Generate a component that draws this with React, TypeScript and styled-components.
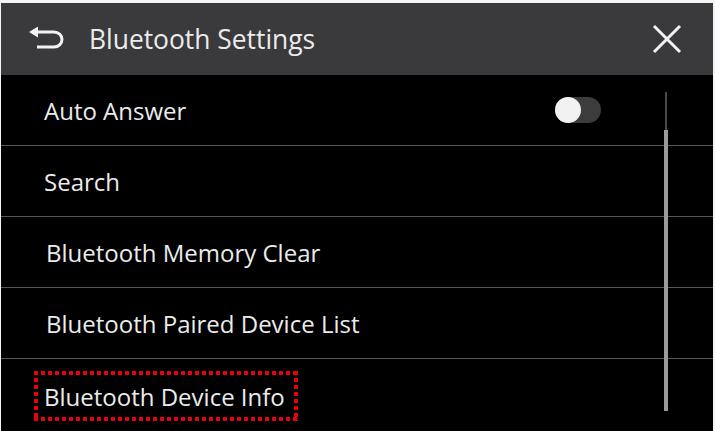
import React from 'react';
import styled, { createGlobalStyle } from 'styled-components';

const GlobalStyle = createGlobalStyle`
  html, body {
    margin: 0;
    padding: 0;
    background: #f4f4f4;
  }
  body {
    font-family: "Open Sans", "Noto Sans", sans-serif;
  }
`;

const Screen = styled.div`
  margin: 3px 2px 0 1px;
  height: 428px;
  background: #000;
  display: flex;
  flex-direction: column;
  overflow: hidden;
`;

const Header = styled.header`
  height: 72px;
  flex: none;
  background: #3a393c;
  display: flex;
  align-items: center;
  padding: 0 31px 0 27px;
`;

const IconButton = styled.button`
  background: transparent;
  border: none;
  padding: 0;
  display: flex;
  align-items: center;
  justify-content: center;
  color: #f2f2f2;
  cursor: pointer;
`;

const HeaderTitle = styled.h1`
  flex: 1;
  margin: 0 0 0 25px;
  font-size: 26.4px;
  font-weight: 400;
  color: #ececec;
  letter-spacing: 0;
`;

const Body = styled.div`
  position: relative;
  flex: 1;
  display: flex;
  flex-direction: column;
`;

const Row = styled.div<{ $indent?: number; $last?: boolean }>`
  height: 70px;
  flex: none;
  border-bottom: ${p => (p.$last ? 'none' : '1px solid #555')};
  display: flex;
  align-items: center;
  padding: 0 112px 0 ${p => p.$indent ?? 43}px;
`;

const Label = styled.span`
  flex: 1;
  font-size: 24px;
  color: #ebebeb;
`;

const dotsX = 'repeating-linear-gradient(90deg, #e8000b 0 4px, transparent 4px 7px)';
const dotsY = 'repeating-linear-gradient(180deg, #e8000b 0 4px, transparent 4px 7px)';

const Highlight = styled.span`
  box-sizing: border-box;
  font-size: 24px;
  color: #ebebeb;
  height: 50px;
  width: 264px;
  display: flex;
  align-items: center;
  padding: 0 0 0 10px;
  margin-left: -11px;
  margin-top: 4px;
  background:
    ${dotsX} top left / 100% 4px no-repeat,
    ${dotsX} bottom left / 100% 4px no-repeat,
    ${dotsY} top left / 4px 100% no-repeat,
    ${dotsY} top right / 4px 100% no-repeat;
`;

const Toggle = styled.div<{ $on: boolean }>`
  width: 46px;
  height: 26px;
  border-radius: 13px;
  background: ${p => (p.$on ? '#2a7de1' : '#3c3c3c')};
  position: relative;
  &::before {
    content: '';
    position: absolute;
    top: 0;
    left: ${p => (p.$on ? '20px' : '0')};
    width: 26px;
    height: 26px;
    border-radius: 50%;
    background: #f2f2f2;
  }
`;

const ScrollTrack = styled.div`
  position: absolute;
  left: 664px;
  top: 17px;
  width: 2px;
  height: 319px;
  background: #4a4a4a;
`;

const ScrollThumb = styled.div`
  position: absolute;
  left: -1px;
  top: 38px;
  width: 4px;
  bottom: 0;
  background: #9b9b9b;
`;

const BackIcon = () => (
  <svg width="36" height="24" viewBox="0 0 36 24" fill="none">
    <path d="M8 5 H26 A8 7.5 0 0 1 26 20 H9" stroke="currentColor" strokeWidth="3" />
    <path d="M1 5 L10 -0.5 L10 10.5 Z" fill="currentColor" />
  </svg>
);

const CloseIcon = () => (
  <svg width="30" height="30" viewBox="0 0 30 30" fill="none">
    <path d="M2 2 L28 28 M28 2 L2 28" stroke="currentColor" strokeWidth="3" />
  </svg>
);

export default function App() {
  return (
    <>
      <GlobalStyle />
      <Screen>
        <Header>
          <IconButton aria-label="Back">
            <BackIcon />
          </IconButton>
          <HeaderTitle>Bluetooth Settings</HeaderTitle>
          <IconButton aria-label="Close">
            <CloseIcon />
          </IconButton>
        </Header>
        <Body>
          <Row>
            <Label>Auto Answer</Label>
            <Toggle $on={false} />
          </Row>
          <Row>
            <Label>Search</Label>
          </Row>
          <Row $indent={45}>
            <Label>Bluetooth Memory Clear</Label>
          </Row>
          <Row $indent={45}>
            <Label>Bluetooth Paired Device List</Label>
          </Row>
          <Row $indent={44} $last>
            <Highlight>Bluetooth Device Info</Highlight>
          </Row>
          <ScrollTrack>
            <ScrollThumb />
          </ScrollTrack>
        </Body>
      </Screen>
    </>
  );
}
